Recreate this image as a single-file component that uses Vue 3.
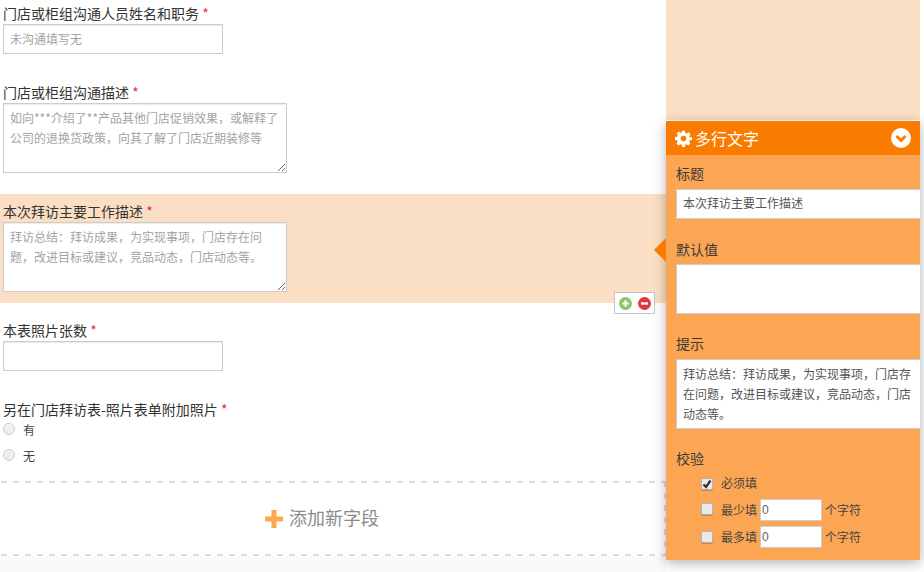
<script setup>
const fullStop = '拜访总结：拜访成果，为实现事项，门店存在问题，改进目标或建议，竞品动态，门店动态等。'
</script>

<template>
  <div class="page">
    <main class="form">
      <section class="field f1">
        <div class="label">门店或柜组沟通人员姓名和职务 <span class="req">*</span></div>
        <input class="short" placeholder="未沟通填写无" />
      </section>
      <section class="field f2">
        <div class="label">门店或柜组沟通描述 <span class="req">*</span></div>
        <textarea placeholder="如向***介绍了**产品其他门店促销效果，或解释了公司的退换货政策，向其了解了门店近期装修等"></textarea>
      </section>
      <section class="field f3 active">
        <div class="label">本次拜访主要工作描述 <span class="req">*</span></div>
        <textarea :placeholder="fullStop"></textarea>
        <div class="tools">
          <svg width="13" height="13" viewBox="0 0 14 14"><circle cx="7" cy="7" r="7" fill="#8fc568"/><path d="M3.500 7h7M7 3.500v7" stroke="#fff" stroke-width="2.200"/></svg>
          <svg width="13" height="13" viewBox="0 0 14 14"><circle cx="7" cy="7" r="7" fill="#e0373f"/><path d="M3.200 7h7.600" stroke="#fff" stroke-width="2.600"/></svg>
        </div>
      </section>
      <section class="field f4">
        <div class="label">本表照片张数 <span class="req">*</span></div>
        <input class="short" />
      </section>
      <section class="field f5">
        <div class="label">另在门店拜访表-照片表单附加照片 <span class="req">*</span></div>
        <div class="radios">
          <div class="radio"><i></i>有</div>
          <div class="radio"><i></i>无</div>
        </div>
      </section>
      <div class="add">
        <svg width="20" height="20" viewBox="0 0 20 20"><path d="M7.500 1h5v6.500H19v5h-6.500V19h-5v-6.500H1v-5h6.500z" fill="#fba94a"/></svg>
        <span>添加新字段</span>
      </div>
      <div class="rest"></div>
    </main>
    <div class="side-top"></div>

    <aside class="panel">
      <span class="arrow"></span>
      <header>
        <span class="title">
          <svg width="17" height="17" viewBox="0 0 24 24"><path fill="#fff" fill-rule="evenodd" d="M10 1h4l.6 3.200 1.900.8 2.700-1.800 2.800 2.800-1.800 2.700.8 1.900L24 10v4l-3.200.6-.8 1.900 1.800 2.700-2.800 2.800-2.700-1.800-1.900.8L14 24h-4l-.6-3.200-1.900-.8-2.700 1.800-2.800-2.800 1.800-2.700-.8-1.900L0 14v-4l3.200-.6.8-1.900L2.200 4.800 5 2l2.700 1.800 1.900-.8zM12 8a4 4 0 1 0 0 8 4 4 0 0 0 0-8z"/></svg>
          多行文字
        </span>
        <svg width="20" height="20" viewBox="0 0 20 20"><circle cx="10" cy="10" r="10" fill="#fff"/><path d="M5.500 8l4.500 4.500L14.500 8" fill="none" stroke="#f97b00" stroke-width="3"/></svg>
      </header>
      <div class="body">
        <label class="p-label l1">标题</label>
        <div class="box one">本次拜访主要工作描述</div>
        <label class="p-label l2">默认值</label>
        <div class="box two"></div>
        <label class="p-label l3">提示</label>
        <div class="box three">{{ fullStop }}</div>
        <label class="p-label l4">校验</label>
        <div class="check first"><i class="on"><svg width="10" height="10" viewBox="0 0 10 10"><path d="M1.500 5.500L4 8l4.500-6.500" fill="none" stroke="#333" stroke-width="2.200"/></svg></i><span>必须填</span></div>
        <div class="check second"><i></i><span>最少填</span><b>0</b><span>个字符</span></div>
        <div class="check third"><i></i><span>最多填</span><b>0</b><span>个字符</span></div>
      </div>
    </aside>
  </div>
</template>

<style>
html, body { margin: 0; background: #fff; }
</style>

<style scoped>
.page {
  position: relative;
  width: 924px;
  height: 572px;
  overflow: hidden;
  display: flex;
  font-family: "Noto Sans CJK SC", "Liberation Sans", sans-serif;
  color: #333;
}
.form { width: 666px; flex: none; display: flex; flex-direction: column; }
.side-top { width: 254px; height: 120px; background: #fbdfc4; }
.field { position: relative; padding: 0 3px; box-sizing: border-box; }
.label { font-size: 14px; line-height: 20px; height: 20px; margin-bottom: 1px; }
.req { color: #e8303a; }
.f1 { height: 82px; padding-top: 3px; }
.f2 { height: 112px; }
.f3 { height: 109px; padding-top: 7px; }
.f4 { height: 79px; padding-top: 17px; }
.f5 { height: 99px; padding-top: 17px; }
.active { background: #fbdfc4; }
input, textarea {
  display: block;
  box-sizing: border-box;
  border: 1px solid #ccc;
  box-shadow: inset 0 1px 1px rgba(0,0,0,.08);
  background: #fff;
  font: 12px/20px "Noto Sans CJK SC", "Liberation Sans", sans-serif;
  padding: 4px 6px;
  outline: none;
  border-radius: 0;
  margin: 0;
}
.short { width: 220px; height: 30px; padding-bottom: 6px; }
textarea { width: 284px; height: 70px; resize: vertical; }
input::placeholder, textarea::placeholder { color: #a3a3a3; opacity: 1; }
.tools {
  position: absolute;
  left: 614px;
  top: 98px;
  width: 41px;
  height: 22px;
  box-sizing: border-box;
  border: 1px solid #c4c4c4;
  background: #fff;
  display: flex;
  align-items: center;
  justify-content: center;
  gap: 6px;
}
.radios { margin-top: -4px; }
.radio {
  display: flex;
  align-items: center;
  font-size: 12px;
  height: 26px;
  color: #444;
}
.radio i {
  box-sizing: border-box;
  width: 12px;
  height: 12px;
  border-radius: 50%;
  margin-right: 8px;
  border: 1px solid #ccc;
  background: #eee;
  box-shadow: inset 0 1px 1px #fff;
}
.add {
  height: 75px;
  flex: none;
  display: flex;
  align-items: center;
  justify-content: center;
  gap: 5px;
  font-size: 18px;
  color: #8b8b8b;
  padding-right: 23px;
  box-sizing: border-box;
  background:
    repeating-linear-gradient(90deg, #ddd 0 6px, transparent 6px 12px) 1px 0 / 100% 2px no-repeat,
    repeating-linear-gradient(90deg, #ddd 0 6px, transparent 6px 12px) 1px 100% / 100% 2px no-repeat,
    repeating-linear-gradient(180deg, #ddd 0 6px, transparent 6px 12px) 100% 0 / 2px 100% no-repeat;
}
.add span { margin-top: -3px; }
.rest { flex: 1; background: #fafafa; }
.panel {
  position: absolute;
  left: 666px;
  top: 121px;
  width: 254px;
  height: 439px;
  background: #fca553;
  box-shadow: 0 3px 12px rgba(0,0,0,.3);
}
.arrow {
  position: absolute;
  left: -12px;
  top: 117px;
  border-style: solid;
  border-width: 12px 12px 12px 0;
  border-color: transparent #f97b00 transparent transparent;
}
header {
  height: 34px;
  background: #f97b00;
  color: #fff;
  display: flex;
  align-items: center;
  justify-content: space-between;
  padding: 0 9px;
  font-size: 16px;
}
.title { display: flex; align-items: center; gap: 3px; }
.body { padding: 0 0 0 10px; color: #3b3b3b; }
.p-label { display: block; font-size: 14px; line-height: 20px; }
.l1 { padding-top: 8px; }
.l2, .l3, .l4 { margin-top: 19px; }
.l2 { margin-top: 20px; }
.box {
  box-sizing: border-box;
  margin-top: 6px;
  width: 244px;
  background: #fff;
  border: 1px solid #ccc;
  border-right: 0;
  font-size: 12px;
  line-height: 20px;
  padding: 4px 6px;
  color: #555;
}
.one { height: 30px; padding-top: 3px; }
.two { height: 50px; margin-top: 5px; }
.three { height: 70px; padding-right: 3px; }
.check {
  display: flex;
  align-items: center;
  height: 26px;
  margin-left: 25px;
  font-size: 12px;
  color: #444;
}
.first { margin-top: 2px; }
.second, .third { margin-top: 1px; }
.check span { margin-top: -2px; }
.check i {
  width: 12px;
  height: 12px;
  box-sizing: border-box;
  border: 1px solid #b3b3b3;
  background: #e9e9e9;
  box-shadow: 0 1px 0 rgba(0,0,0,.2);
  margin-right: 8px;
  border-radius: 2px;
  display: flex;
  align-items: center;
  justify-content: center;
}
.first i { margin-top: 2px; }
.second i { margin-top: -2px; }
.check b {
  box-sizing: border-box;
  width: 62px;
  height: 22px;
  margin: 0 3px;
  padding-left: 1px;
  background: #fff;
  border: 1px solid #ccc;
  font-weight: 400;
  font-size: 12px;
  line-height: 20px;
  color: #566;
  font-family: "Liberation Sans", sans-serif;
}
</style>
